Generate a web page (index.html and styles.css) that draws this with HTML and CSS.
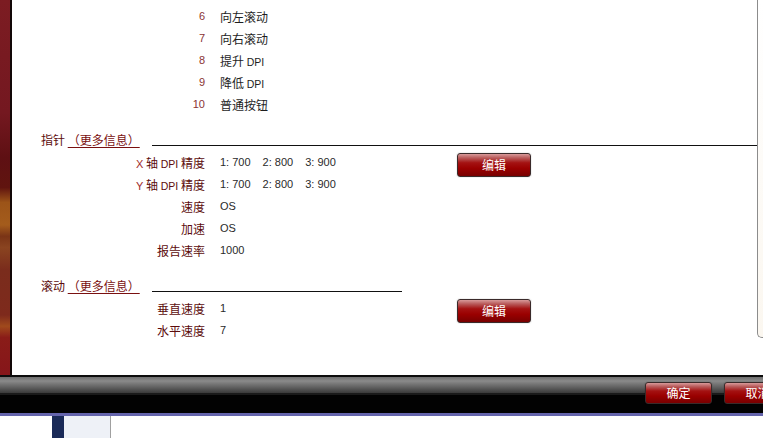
FILE: index.html
```html
<!DOCTYPE html>
<html lang="zh-CN">
<head>
<meta charset="utf-8">
<title>设置</title>
<link rel="stylesheet" href="styles.css">
</head>
<body>
<div class="screen">
  <div class="main">
    <div class="strip"></div>
    <div class="sep"></div>
    <div class="content">
      <div class="grid">
        <div class="num">6</div><div class="val cn">向左滚动</div>
        <div class="num">7</div><div class="val cn">向右滚动</div>
        <div class="num">8</div><div class="val cn">提升 <span class="lat">DPI</span></div>
        <div class="num">9</div><div class="val cn">降低 <span class="lat">DPI</span></div>
        <div class="num">10</div><div class="val cn">普通按钮</div>
      </div>

      <div class="head">
        <div class="head-title">指针 <a class="more">（更多信息）</a></div>
        <div class="head-line"></div>
      </div>
      <div class="grid">
        <div class="lbl"><span class="axis">X</span> 轴 <span class="lat">DPI</span> 精度</div>
        <div class="val"><span class="dpi">1: 700</span><span class="dpi">2: 800</span><span class="dpi">3: 900</span></div>
        <button class="btn edit">编辑</button>
        <div class="lbl"><span class="axis">Y</span> 轴 <span class="lat">DPI</span> 精度</div>
        <div class="val"><span class="dpi">1: 700</span><span class="dpi">2: 800</span><span class="dpi">3: 900</span></div>
        <div class="lbl">速度</div><div class="val">OS</div>
        <div class="lbl">加速</div><div class="val">OS</div>
        <div class="lbl">报告速率</div><div class="val">1000</div>
      </div>

      <div class="head">
        <div class="head-title">滚动 <a class="more">（更多信息）</a></div>
        <div class="head-line short"></div>
      </div>
      <div class="grid">
        <div class="lbl">垂直速度</div><div class="val">1</div>
        <button class="btn edit">编辑</button>
        <div class="lbl">水平速度</div><div class="val">7</div>
      </div>
    </div>
    <div class="rpanel"></div>
  </div>

  <div class="bar">
    <div class="bar-top"></div>
    <div class="bar-bottom"></div>
    <div class="bar-buttons">
      <button class="btn action">确定</button>
      <button class="btn action">取消</button>
    </div>
  </div>
  <div class="bar-line"></div>

  <div class="taskbar">
    <div class="tb-dark"></div>
    <div class="tb-light"></div>
  </div>
</div>
</body>
</html>
```

FILE: styles.css
```css
* { box-sizing: border-box; }
html, body { margin: 0; padding: 0; background: #fff; }
body {
  font-family: "Noto Sans CJK SC", "Liberation Sans", sans-serif;
  font-size: 12px;
  color: #222;
}
.screen {
  width: 763px;
  height: 438px;
  overflow: hidden;
  position: relative;
  background: #fff;
}
.main {
  display: flex;
  height: 375px;
}
.strip {
  width: 10px;
  flex: none;
  background: linear-gradient(to bottom,
    #7c1c22 0%, #741820 30%, #5e1013 42%, #60140f 50%,
    #9c5418 54%, #a45c1c 60%, #7a3416 63%, #8a4420 66%,
    #7a2c1c 72%, #7e2a1c 84%, #a04a1c 87%, #8a1c18 90%, #86161a 100%);
}
.sep {
  width: 2px;
  flex: none;
  background: #120808;
}
.content {
  width: 745px;
  flex: none;
  padding-top: 5px;
}
.rpanel {
  width: 6px;
  flex: none;
  height: 338px;
  border-left: 1px solid #8c8c8c;
  border-bottom: 1px solid #8c8c8c;
  border-bottom-left-radius: 5px;
  background: linear-gradient(to bottom, #ffffff, #fbf7f0);
}
.grid {
  display: grid;
  grid-template-columns: 193px 222px 74px;
  column-gap: 15px;
  grid-auto-rows: 22px;
  align-items: center;
}
.num {
  grid-column: 1;
  text-align: right;
  font-family: "Liberation Sans", sans-serif;
  font-size: 11px;
  color: #8a3434;
}
.val {
  grid-column: 2;
  font-family: "Liberation Sans", "Noto Sans CJK SC", sans-serif;
  font-size: 11px;
  color: #2a2a2a;
  white-space: nowrap;
}
.val.cn {
  font-family: "Noto Sans CJK SC", sans-serif;
  font-size: 12px;
  color: #1e1e1e;
}
.lat {
  font-family: "Liberation Sans", sans-serif;
  font-size: 10.5px;
}
.lbl {
  grid-column: 1;
  text-align: right;
  color: #5c0c0c;
  white-space: nowrap;
}
.axis {
  font-family: "Liberation Sans", sans-serif;
  font-size: 11px;
  color: #a02a2a;
}
.dpi { margin-right: 12px; }
.head {
  display: flex;
  align-items: flex-start;
  height: 20px;
  margin-top: 15px;
  margin-bottom: 1px;
  padding-left: 29px;
}
.head-title {
  width: 111px;
  flex: none;
  line-height: 20px;
  color: #5c0c0c;
  white-space: nowrap;
}
.more {
  color: #7a1010;
  text-decoration: underline;
  text-underline-offset: 2px;
}
.head-line {
  flex: 1;
  height: 1px;
  margin-top: 15px;
  background: #111;
}
.head-line.short { flex: none; width: 250px; }
.btn {
  font-family: "Noto Sans CJK SC", sans-serif;
  font-size: 12px;
  color: #fff;
  border: 1px solid #3a2a2a;
  border-radius: 3px;
  padding: 0;
  background: linear-gradient(to bottom,
    #d89a9a 0%, #b85a5a 18%, #a41212 40%, #9a0000 65%, #780000 100%);
  box-shadow: 0 0 0 1px rgba(0,0,0,0.05);
  line-height: 20px;
}
.edit {
  grid-column: 3;
  grid-row: 1;
  align-self: start;
  margin-top: 2px;
  width: 74px;
  height: 24px;
}
.bar {
  position: relative;
  height: 38px;
}
.bar-top {
  height: 20px;
  border-top: 2px solid #0c0c0c;
  background: linear-gradient(to bottom, #6e6e6e 0%, #8a8a8a 25%, #5a5a5a 70%, #3a3a3a 100%);
  border-bottom: 2px solid #1a1a1a;
}
.bar-bottom {
  height: 18px;
  background: #020202;
}
.bar-buttons {
  position: absolute;
  top: 7px;
  left: 645px;
  display: flex;
  gap: 12px;
}
.action {
  width: 67px;
  height: 22px;
  flex: none;
}
.bar-line {
  height: 3px;
  background: #6464ac;
}
.taskbar {
  display: flex;
  height: 22px;
  padding-left: 52px;
}
.tb-dark {
  width: 12px;
  background: #1a2a58;
}
.tb-light {
  width: 47px;
  background: #eef1f7;
  border-right: 1px solid #a0a0a0;
}
```
